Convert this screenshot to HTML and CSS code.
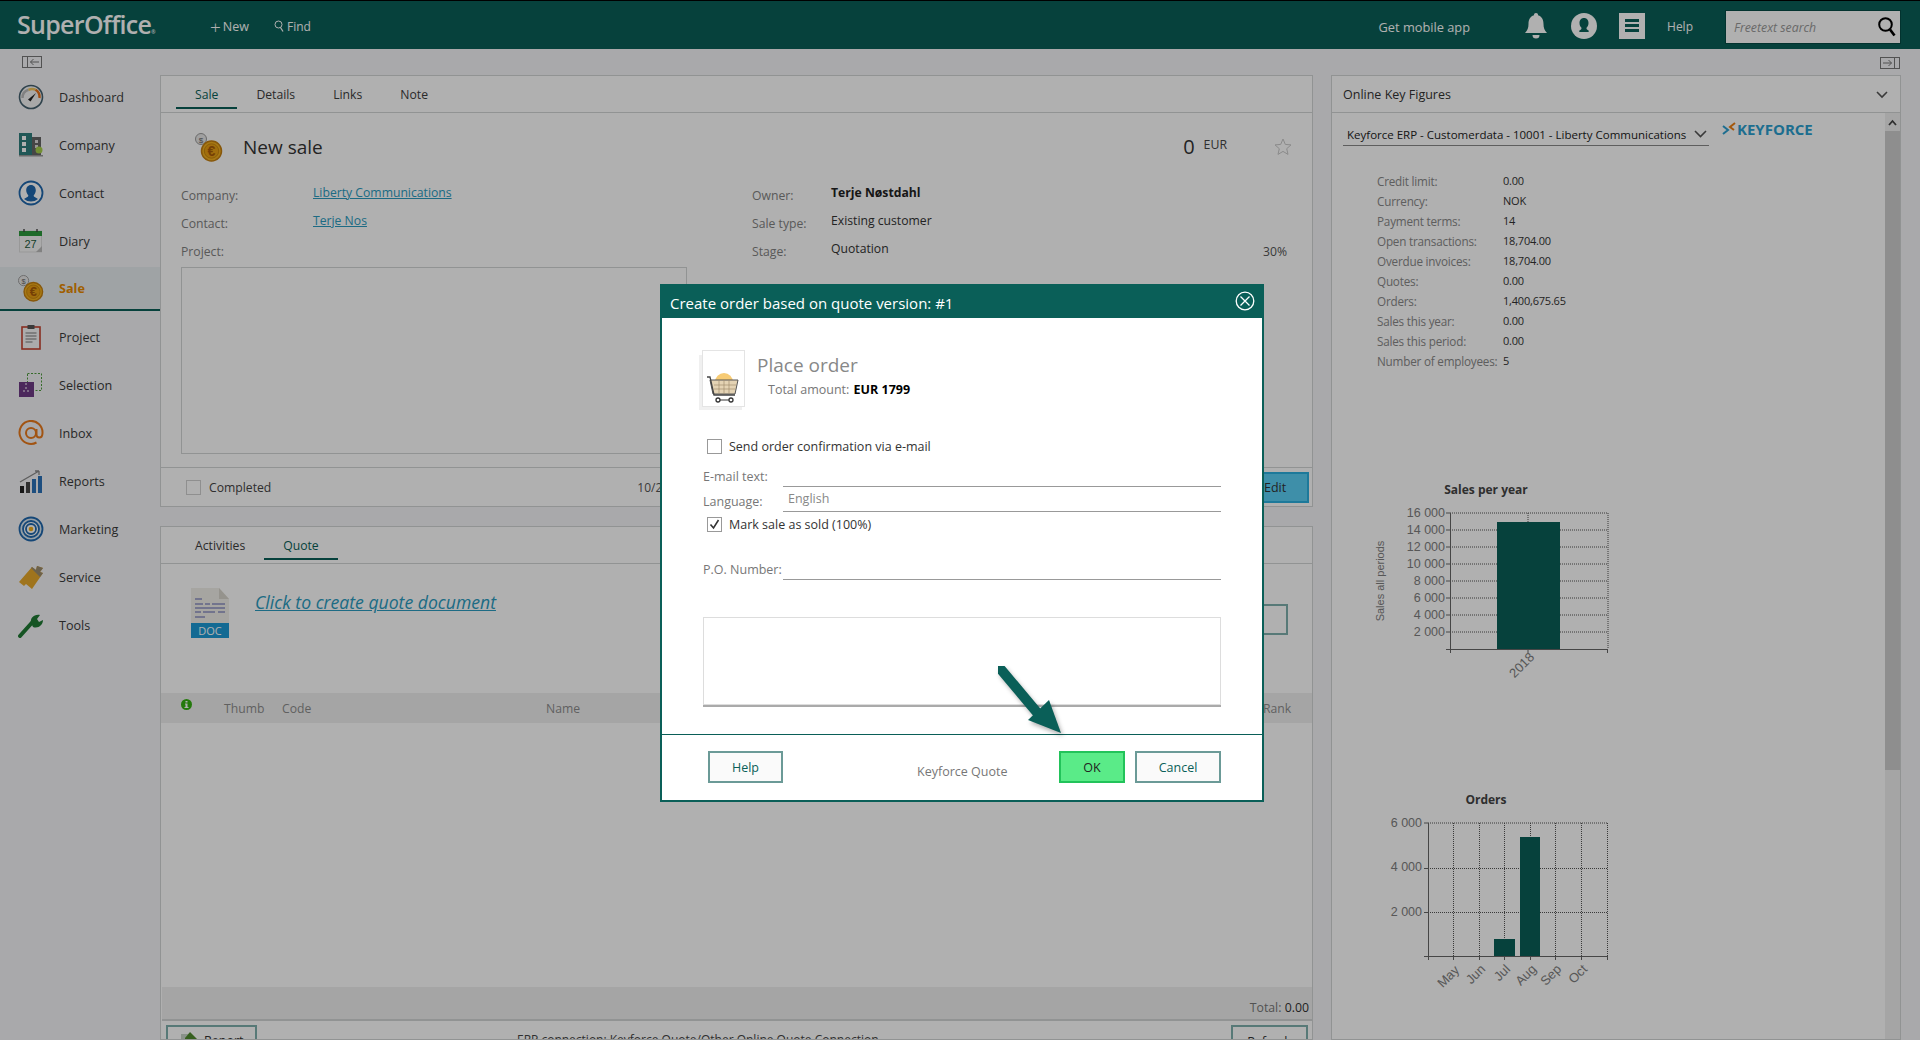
FILE: index.html
```html
<!DOCTYPE html>
<html lang="en">
<head>
  <meta charset="UTF-8">
  <title>SuperOffice - New sale</title>
  <link rel="stylesheet" href="styles.css">
</head>
<body>

<header class="topbar">
  <div class="logo">SuperOffice<span class="logo-mark">®</span></div>
  <a class="top-link new-link"><span class="plus">+</span>New</a>
  <a class="top-link find-link">
    <svg width="10" height="13" viewBox="0 0 10 13"><circle cx="4.5" cy="4.5" r="3.5" fill="none" stroke="#fff"/><path d="M6.5 7.5 9 11.5" stroke="#fff" stroke-width="1.2"/></svg>
    Find
  </a>
  <div class="top-spacer"></div>
  <a class="top-link mobile-link">Get mobile app</a>
  <svg class="top-icon bell" width="22" height="26" viewBox="0 0 22 26"><path d="M11 0a2 2 0 0 1 2 2.300C17 3.500 18.500 7 18.500 11c0 4 1 6.500 3.500 9H0c2.500-2.500 3.500-5 3.500-9 0-4 1.500-7.500 5.500-8.700A2 2 0 0 1 11 0z" fill="#fff"/><path d="M7.500 22h7a3.500 3.500 0 0 1-7 0z" fill="#fff"/></svg>
  <svg class="top-icon profile" width="26" height="26" viewBox="0 0 26 26"><circle cx="13" cy="13" r="13" fill="#fff"/><path d="M13 5c3 0 4.500 2.300 4.500 5 0 2-.8 3.600-1.800 4.600-.4.500-.2 1.400.3 1.800l1.500 1.100c.6.400.5 1.500-.5 1.500H9c-1 0-1.100-1.100-.5-1.500l1.500-1.100c.5-.4.700-1.300.3-1.800-1-1-1.800-2.600-1.800-4.600C8.500 7.300 10 5 13 5z" fill="#0a5f58"/></svg>
  <div class="menu-icon"><span></span><span></span><span></span></div>
  <a class="top-link help-link">Help</a>
  <div class="search">
    <span class="search-text">Freetext search</span>
    <svg width="18" height="20" viewBox="0 0 18 20"><circle cx="7.500" cy="7.500" r="6.300" fill="none" stroke="#000" stroke-width="2"/><path d="M12 12.500 16.500 18.500" stroke="#000" stroke-width="2.600"/></svg>
  </div>
</header>

<div class="workspace">
  <nav class="sidebar">
    <div class="strip">
      <svg width="20" height="12" viewBox="0 0 20 12"><rect x=".5" y=".5" width="19" height="11" fill="none" stroke="#777"/><path d="M5.500 0v12M17 6H8.500M11.500 3 8.500 6l3 3" fill="none" stroke="#777"/></svg>
    </div>
    <a class="nav-item">
      <svg width="26" height="26" viewBox="0 0 26 26"><circle cx="13" cy="13" r="11.500" fill="#f4f4f4" stroke="#44606e" stroke-width="1.600"/><path d="M4.500 14a8.500 8.500 0 0 1 6-8.200" fill="none" stroke="#bbb" stroke-width="2.500"/><path d="M10.500 5.800a8.500 8.500 0 0 1 7-.1" fill="none" stroke="#f2c65c" stroke-width="2.500"/><path d="M17.500 5.700a8.500 8.500 0 0 1 4 8.300" fill="none" stroke="#e8701a" stroke-width="2.500"/><path d="M10 15.500 18 9l-5.500 8.500z" fill="#222"/></svg>
      Dashboard
    </a>
    <a class="nav-item">
      <svg width="26" height="26" viewBox="0 0 26 26"><rect x="1" y="1" width="13" height="22" fill="#2f7f7d"/><rect x="14" y="5" width="9" height="18" fill="#666"/><path d="M4 4h4v4H4zM4 10h4v4H4zM4 16h4v4H4z" fill="#fff"/><path d="M17 8h3v3h-3zM17 13h3v3h-3z" fill="#ddd"/><circle cx="21" cy="18" r="3.500" fill="#a6cf4a"/><rect x="1" y="23" width="24" height="1.500" fill="#999"/></svg>
      Company
    </a>
    <a class="nav-item">
      <svg width="26" height="26" viewBox="0 0 26 26"><circle cx="13" cy="13" r="11.500" fill="#fff" stroke="#1f67ad" stroke-width="1.800"/><path d="M13 5c3 0 4.800 2.400 4.800 5.300 0 2.200-1 3.800-2 4.900-.3.500 0 1.200.5 1.500l3.700 2.200a11 11 0 0 1-14 0l3.700-2.200c.5-.3.800-1 .5-1.500-1-1.100-2-2.700-2-4.900C8.200 7.400 10 5 13 5z" fill="#1f67ad"/></svg>
      Contact
    </a>
    <a class="nav-item">
      <svg width="26" height="26" viewBox="0 0 26 26"><rect x="1.500" y="3" width="22" height="21" fill="#f7f7f7" stroke="#ddd"/><rect x="1" y="3" width="23" height="5" fill="#2c9a3c"/><path d="M6 1v3M19 1v3" stroke="#444" stroke-width="1.400"/><path d="M24 18v6h-6z" fill="#bbb"/><text x="12.500" y="19.500" class="diary-day">27</text></svg>
      Diary
    </a>
    <a class="nav-item active">
      <svg width="26" height="28" viewBox="0 0 28 30">
        <circle cx="6" cy="7" r="5.500" fill="#e8e8e8" stroke="#9a9a9a"/>
        <text x="6" y="10.500" class="coin-s">$</text>
        <circle cx="16.500" cy="19" r="10" fill="#f2b01e" stroke="#c47f10" stroke-width="1.500"/>
        <circle cx="16.500" cy="19" r="7.200" fill="#e9a013" stroke="#c9860f"/>
        <text x="16.500" y="24" class="coin-e">€</text>
      </svg>
      Sale
    </a>
    <a class="nav-item">
      <svg width="26" height="26" viewBox="0 0 26 26"><rect x="4" y="3" width="18" height="22" fill="#f8f8f8" stroke="#c5432f" stroke-width="1.600"/><rect x="9.500" y="1" width="7" height="4" fill="#555"/><path d="M7.500 9h11M7.500 12h11M7.500 15h11M7.500 18h7" stroke="#777"/></svg>
      Project
    </a>
    <a class="nav-item">
      <svg width="26" height="26" viewBox="0 0 26 26"><rect x="9.500" y="1.500" width="14" height="17" fill="none" stroke="#4f9b3e" stroke-dasharray="2 1.500"/><rect x="1" y="10" width="15" height="15" fill="#6f3a86"/><path d="M8 11v2M8 15v2M5 19h2M9 19h2" stroke="#fff"/></svg>
      Selection
    </a>
    <a class="nav-item">
      <svg width="26" height="26" viewBox="0 0 26 26"><path d="M18.500 22.500A11.500 11.500 0 1 1 24.500 13c0 3-1.500 4.500-3.300 4.500-1.800 0-2.700-1.200-2.700-3V9" fill="none" stroke="#ea7a1c" stroke-width="2"/><circle cx="13" cy="13" r="5" fill="none" stroke="#ea7a1c" stroke-width="2"/></svg>
      Inbox
    </a>
    <a class="nav-item">
      <svg width="26" height="26" viewBox="0 0 26 26"><path d="M2 14 21 3M21 3h-4M21 3v4" fill="none" stroke="#888" stroke-width="1.300"/><rect x="2" y="18" width="4" height="7" fill="#222"/><rect x="8" y="14" width="4" height="11" fill="#444"/><rect x="14" y="11" width="4" height="14" fill="#2a72b8"/><rect x="20" y="8" width="4" height="17" fill="#2a72b8"/></svg>
      Reports
    </a>
    <a class="nav-item">
      <svg width="26" height="26" viewBox="0 0 26 26"><circle cx="13" cy="13" r="11.500" fill="#d9e6ef" stroke="#1f67ad" stroke-width="1.800"/><circle cx="13" cy="13" r="8" fill="#fff" stroke="#1f67ad" stroke-width="1.800"/><circle cx="13" cy="13" r="5" fill="#fff" stroke="#1f67ad" stroke-width="1.800"/><circle cx="13" cy="13" r="2.300" fill="#f2b01e"/></svg>
      Marketing
    </a>
    <a class="nav-item">
      <svg width="26" height="26" viewBox="0 0 26 26"><path d="M1 18 14 3l4 3 1-4 6 2-3 4 3 1-11 16-6-5 -2 2z" fill="#e7a92a"/><path d="M14 3l4 3 1-4 6 2-3 4 3 1-3 4-9-9z" fill="#9c8d70"/></svg>
      Service
    </a>
    <a class="nav-item">
      <svg width="26" height="26" viewBox="0 0 26 26"><path d="M2 24 15 9.500" stroke="#1f7a34" stroke-width="4" stroke-linecap="round"/><path d="M13 11c-1-5 3-9 9-8l-3 4 2 3 4-2c0 5-5 9-10 7z" fill="#1f7a34"/></svg>
      Tools
    </a>
  </nav>

  <main class="main">
    <div class="strip"></div>

    <section class="panel sale-panel">
      <div class="tabs">
        <a class="tab active tab-sale">Sale</a>
        <a class="tab">Details</a>
        <a class="tab">Links</a>
        <a class="tab">Note</a>
      </div>
      <div class="sale-body">
        <div class="sale-head">
          <svg width="28" height="30" viewBox="0 0 28 30">
            <circle cx="6" cy="7" r="5.500" fill="#e8e8e8" stroke="#9a9a9a"/>
            <text x="6" y="10.500" class="coin-s">$</text>
            <circle cx="16.500" cy="19" r="10" fill="#f2b01e" stroke="#c47f10" stroke-width="1.500"/>
            <circle cx="16.500" cy="19" r="7.200" fill="#e9a013" stroke="#c9860f"/>
            <text x="16.500" y="24" class="coin-e">€</text>
          </svg>
          <h1>New sale</h1>
          <span class="amount">0</span>
          <span class="currency">EUR</span>
          <svg class="star" width="18" height="18" viewBox="0 0 18 18"><path d="M9 1l2.300 5.400 5.700.5-4.300 3.800 1.300 5.700L9 13.400l-5 3 1.300-5.700L1 6.900l5.700-.5z" fill="none" stroke="#c9c9c9"/></svg>
        </div>
        <div class="sale-fields">
          <div class="fields-left">
            <div class="field"><span class="field-label">Company:</span><a class="field-link">Liberty Communications</a></div>
            <div class="field"><span class="field-label">Contact:</span><a class="field-link">Terje Nos</a></div>
            <div class="field"><span class="field-label">Project:</span></div>
            <div class="project-box"></div>
          </div>
          <div class="fields-right">
            <div class="field"><span class="field-label">Owner:</span><span class="field-value strong">Terje Nøstdahl</span></div>
            <div class="field"><span class="field-label">Sale type:</span><span class="field-value">Existing customer</span></div>
            <div class="field"><span class="field-label">Stage:</span><span class="field-value">Quotation</span><span class="percent">30%</span></div>
          </div>
        </div>
      </div>
      <div class="sale-foot">
        <span class="check"></span>
        <span class="completed">Completed</span>
        <span class="sale-date">10/2/2018</span>
        <button class="btn-edit">Edit</button>
      </div>
    </section>

    <section class="panel quote-panel">
      <div class="tabs">
        <a class="tab tab-activities">Activities</a>
        <a class="tab active">Quote</a>
      </div>
      <div class="quote-row">
        <svg width="38" height="50" viewBox="0 0 38 50"><path d="M0 0h28l10 11v24H0z" fill="#f1efe9"/><path d="M28 0l10 11H28z" fill="#d8d5cc"/><path d="M4 11h7M4 16h8M14 16h5M21 16h13M4 20h30M4 24h6M12 24h12M27 24h7M4 29h10" stroke="#8c92c4" stroke-width="1.400"/><rect y="35" width="38" height="15" fill="#1c9ad6"/><text x="19" y="46.500" class="doc-text">DOC</text></svg>
        <a class="quote-link">Click to create quote document</a>
        <button class="btn-empty"></button>
      </div>
      <div class="table-head">
        <svg class="info-icon" width="11" height="11" viewBox="0 0 11 11"><circle cx="5.500" cy="5.500" r="5.500" fill="#35b012"/><path d="M4.500 2h2v1.500h-2zM4 4.500h2.500V8H7.500v1h-4V8h1V5.500H4z" fill="#fff"/></svg>
        <span class="th th-thumb">Thumb</span>
        <span class="th th-code">Code</span>
        <span class="th th-name">Name</span>
        <span class="th th-rank">Rank</span>
      </div>
      <div class="table-rows"></div>
      <div class="total-bar"><span class="total-label">Total:</span>&nbsp;0.00</div>
      <div class="quote-foot">
        <button class="btn-foot btn-report">
          <svg width="17" height="18" viewBox="0 0 17 18"><rect y="2" width="9" height="14" fill="#c8d4c8"/><path d="M9 0l8 8v10H4V6z" fill="#4f8a2e"/></svg>
          Report
        </button>
        <span class="erp-text">ERP connection: Keyforce Quote/Other Online Quote Connection</span>
        <button class="btn-foot btn-refresh">Refresh</button>
      </div>
    </section>
  </main>

  <aside class="side">
    <div class="strip strip-right">
      <svg width="20" height="12" viewBox="0 0 20 12"><rect x=".5" y=".5" width="19" height="11" fill="none" stroke="#777"/><path d="M14.500 0v12M3 6h8.500M8.500 3l3 3-3 3" fill="none" stroke="#777"/></svg>
    </div>
    <section class="panel figures">
      <div class="figures-head">
        <span>Online Key Figures</span>
        <svg width="12" height="8" viewBox="0 0 12 8"><path d="M1 1l5 5 5-5" fill="none" stroke="#555" stroke-width="1.600"/></svg>
      </div>
      <div class="figures-body">
        <div class="figures-content">
          <div class="source-row">
            <div class="source-select">
              <span>Keyforce ERP - Customerdata - 10001 - Liberty Communications</span>
              <svg width="13" height="8" viewBox="0 0 13 8"><path d="M1 1l5.500 5.500L12 1" fill="none" stroke="#555" stroke-width="1.600"/></svg>
            </div>
            <div class="keyforce">
              <svg width="15" height="15" viewBox="0 0 15 15"><path d="M1 4l5 4-5 4" fill="none" stroke="#2b9fd0" stroke-width="2"/><path d="M13 1 8 5l4 3" fill="none" stroke="#ee7f12" stroke-width="2"/></svg>
              <span>KEYFORCE</span>
            </div>
          </div>
          <dl class="figures-list">
            <div class="fig"><dt>Credit limit:</dt><dd>0.00</dd></div>
            <div class="fig"><dt>Currency:</dt><dd>NOK</dd></div>
            <div class="fig"><dt>Payment terms:</dt><dd>14</dd></div>
            <div class="fig"><dt>Open transactions:</dt><dd>18,704.00</dd></div>
            <div class="fig"><dt>Overdue invoices:</dt><dd>18,704.00</dd></div>
            <div class="fig"><dt>Quotes:</dt><dd>0.00</dd></div>
            <div class="fig"><dt>Orders:</dt><dd>1,400,675.65</dd></div>
            <div class="fig"><dt>Sales this year:</dt><dd>0.00</dd></div>
            <div class="fig"><dt>Sales this period:</dt><dd>0.00</dd></div>
            <div class="fig"><dt>Number of employees:</dt><dd>5</dd></div>
          </dl>

          <svg class="chart chart-year" width="250" height="210" viewBox="1370 480 250 210">
            <text x="1486" y="494" class="chart-title">Sales per year</text>
            <text class="axis-name" transform="translate(1384 581) rotate(-90)">Sales all periods</text>
            <path class="grid" d="M1450 513H1608M1450 530H1608M1450 547H1608M1450 564H1608M1450 581H1608M1450 598H1608M1450 615H1608M1450 632H1608M1528 513V522M1608 513V649"/>
            <path class="axis" d="M1450.500 513V649M1446 513h4M1446 530h4M1446 547h4M1446 564h4M1446 581h4M1446 598h4M1446 615h4M1446 632h4M1446 649.500H1608M1450.500 649v4M1528 649v4M1607.500 649v4"/>
            <rect class="bar" x="1497" y="522" width="63" height="127"/>
            <g class="y-labels">
              <text x="1445" y="517">16 000</text>
              <text x="1445" y="534">14 000</text>
              <text x="1445" y="551">12 000</text>
              <text x="1445" y="568">10 000</text>
              <text x="1445" y="585">8 000</text>
              <text x="1445" y="602">6 000</text>
              <text x="1445" y="619">4 000</text>
              <text x="1445" y="636">2 000</text>
            </g>
            <text class="x-label" transform="translate(1535 658) rotate(-45)">2018</text>
          </svg>

          <svg class="chart chart-orders" width="250" height="210" viewBox="1370 790 250 210">
            <text x="1486" y="804" class="chart-title">Orders</text>
            <path class="grid" d="M1428 823H1608M1428 868.500H1608M1428 912.500H1608M1453.500 823V956M1479.500 823V956M1504.500 823V939M1530.500 823V837M1555.500 823V956M1581.500 823V956M1607.500 823V956"/>
            <path class="axis" d="M1428.500 823V956M1424 823h4M1424 868.500h4M1424 912.500h4M1424 956.500H1608M1428.500 956v4M1453.500 956v4M1479.500 956v4M1504.500 956v4M1530.500 956v4M1555.500 956v4M1581.500 956v4M1607.500 956v4"/>
            <rect class="bar" x="1494" y="939" width="21" height="17"/>
            <rect class="bar" x="1520" y="837" width="20" height="119"/>
            <g class="y-labels">
              <text x="1422" y="827">6 000</text>
              <text x="1422" y="871">4 000</text>
              <text x="1422" y="916">2 000</text>
            </g>
            <text class="x-label" transform="translate(1460 971) rotate(-45)">May</text>
            <text class="x-label" transform="translate(1486 970) rotate(-45)">Jun</text>
            <text class="x-label" transform="translate(1511 970) rotate(-45)">Jul</text>
            <text class="x-label" transform="translate(1537 970) rotate(-45)">Aug</text>
            <text class="x-label" transform="translate(1562 970) rotate(-45)">Sep</text>
            <text class="x-label" transform="translate(1588 970) rotate(-45)">Oct</text>
          </svg>
        </div>
        <div class="scrollbar">
          <svg width="15" height="18" viewBox="0 0 15 18"><path d="M4 12l3.500-4 3.500 4" fill="none" stroke="#444" stroke-width="1.800"/></svg>
          <div class="scroll-thumb"></div>
        </div>
      </div>
    </section>
  </aside>
</div>

<div class="backdrop">
  <div class="dialog">
    <div class="dialog-title">
      <span>Create order based on quote version: #1</span>
      <svg width="20" height="20" viewBox="0 0 20 20"><circle cx="10" cy="10" r="8.800" fill="none" stroke="#fff" stroke-width="1.300"/><path d="M5.500 5.500l9 9M14.500 5.500l-9 9" stroke="#fff" stroke-width="1.300"/></svg>
    </div>
    <div class="dialog-body">
      <div class="order-head">
        <svg class="order-icon" width="49" height="60" viewBox="0 0 49 60">
          <rect x="0" y="5" width="43" height="55" fill="#f0f0f0"/>
          <rect x="3.500" y=".5" width="42" height="56" fill="#fff" stroke="#e4e4e4"/>
          <path d="M16 32a9 9 0 0 1 18 0z" fill="#f7cb74"/>
          <path d="M11 30h28l-3 14H14z" fill="#e4d3b4" stroke="#555"/>
          <path d="M8 27h3l4 18h21" fill="none" stroke="#444" stroke-width="1.300"/>
          <path d="M15 35h22M15 39h21M20 30v14M25 30v14M30 30v14" stroke="#a58f70" stroke-width=".7"/>
          <circle cx="19" cy="50" r="2" fill="#fff" stroke="#333" stroke-width="1.300"/>
          <circle cx="32" cy="50" r="2" fill="#fff" stroke="#333" stroke-width="1.300"/>
          <path d="M21 50h9" stroke="#333"/>
        </svg>
        <div class="order-text">
          <div class="order-title">Place order</div>
          <div class="order-total">Total amount: <b>EUR 1799</b></div>
        </div>
      </div>
      <label class="check-row check-mail"><span class="check dark"></span>Send order confirmation via e-mail</label>
      <div class="line-field mail-field"><span>E-mail text:</span><div class="line-input"></div></div>
      <div class="line-field lang-field"><span>Language:</span><div class="line-input">English</div></div>
      <label class="check-row check-sold">
        <span class="check dark"><svg width="13" height="13" viewBox="0 0 13 13"><path d="M2.500 6.500l3 3.500 5-8" fill="none" stroke="#333" stroke-width="1.600"/></svg></span>
        Mark sale as sold (100%)
      </label>
      <div class="line-field po-field"><span>P.O. Number:</span><div class="line-input"></div></div>
      <div class="note-box"></div>
    </div>
    <div class="dialog-foot">
      <button class="btn btn-help">Help</button>
      <span class="foot-name">Keyforce Quote</span>
      <button class="btn btn-ok">OK</button>
      <button class="btn btn-cancel">Cancel</button>
    </div>
    <svg class="arrow" width="76" height="80" viewBox="0 0 76 80"><path d="M3 3.500 42 50" stroke="#0a5f58" stroke-width="10" stroke-linecap="round"/><path d="M63 67 30 54 51 34z" fill="#0a5f58"/></svg>
  </div>
</div>

</body>
</html>
```

FILE: styles.css
```css
* {
  box-sizing: border-box;
}

body {
  margin: 0;
  height: 100vh;
  overflow: hidden;
  display: flex;
  flex-direction: column;
  background: #f5f5f8;
  color: #3d3d3d;
  font-family: "Open Sans", "Noto Sans", sans-serif;
  font-size: 12px;
}

.coin-s {
  font: 8px "Liberation Sans", sans-serif;
  text-anchor: middle;
  fill: #666;
}

.coin-e {
  font: bold 14px "Liberation Sans", sans-serif;
  text-anchor: middle;
  fill: #a85a08;
}

.diary-day {
  font: 11px "Liberation Sans", sans-serif;
  text-anchor: middle;
  fill: #1c5a3c;
}

.doc-text {
  font: 11px "Open Sans", sans-serif;
  text-anchor: middle;
  fill: #fff;
}

/* top bar */
.topbar {
  height: 49px;
  flex: none;
  display: flex;
  align-items: center;
  padding-top: 1px;
  background: #0a5f58;
  border-top: 1px solid #000;
  color: #fff;
}

.logo {
  width: 210px;
  margin-top: -4px;
  padding-left: 17px;
  font-size: 25px;
  font-weight: 600;
  letter-spacing: -0.7px;
}

.logo-mark {
  font-size: 5px;
}

.top-link {
  padding-top: 2px;
  font-size: 12px;
  color: #fff;
}

.plus {
  font-size: 19px;
  line-height: 12px;
  font-weight: 300;
  margin-right: 2px;
}

.new-link {
  display: flex;
  align-items: center;
  width: 64px;
  font-size: 12.500px;
}

.find-link {
  display: flex;
  align-items: center;
  gap: 3px;
}

.top-spacer {
  flex: 1;
}

.mobile-link {
  margin-right: 55px;
  font-size: 12.800px;
}

.bell {
  margin-right: 24px;
}

.profile {
  margin-right: 22px;
}

.menu-icon {
  width: 26px;
  height: 26px;
  background: #fff;
  display: flex;
  flex-direction: column;
  justify-content: center;
  gap: 2px;
  padding: 0 6px;
  margin-right: 22px;
}

.menu-icon span {
  height: 3px;
  background: #0a5f58;
}

.help-link {
  margin-right: 33px;
}

.search {
  width: 174px;
  height: 32px;
  margin: 2px 20px 0 0;
  background: #fff;
  outline: 1px solid #054a44;
  display: flex;
  align-items: center;
  justify-content: space-between;
  padding: 0 4px 0 8px;
}

.search-text {
  padding-top: 2px;
  font-style: italic;
  color: #999;
  font-size: 12.300px;
}

/* layout */
.workspace {
  flex: 1;
  min-height: 0;
  display: flex;
}

.strip {
  height: 26px;
  flex: none;
  display: flex;
  align-items: center;
  padding-top: 2px;
}

.strip-right {
  justify-content: flex-end;
  padding-right: 1px;
}

.sidebar {
  width: 160px;
  flex: none;
}

.sidebar .strip {
  padding-left: 22px;
  height: 24px;
}

.nav-item {
  height: 48px;
  display: flex;
  align-items: center;
  gap: 15px;
  padding-left: 18px;
  color: #3a3a3a;
  font-size: 12.600px;
}

.nav-item.active {
  height: 44px;
  margin: 2px 0;
  background: #e6ecef;
  border-bottom: 2px solid #0a5f58;
  color: #e68a00;
  font-weight: 700;
}

.main {
  width: 1153px;
  flex: none;
  display: flex;
  flex-direction: column;
  margin-right: 18px;
}

.side {
  width: 570px;
  flex: none;
  display: flex;
  flex-direction: column;
}

.panel {
  background: #fff;
  border: 1px solid #d2d6d6;
}

/* tabs */
.tabs {
  height: 37px;
  flex: none;
  display: flex;
  padding-left: 15px;
  border-bottom: 1px solid #d2d6d6;
}

.tab {
  height: 33px;
  padding: 0 19px;
  line-height: 38px;
  font-size: 12.200px;
  color: #3d3d3d;
}

.tab.active {
  color: #0a5f58;
  border-bottom: 2px solid #0a5f58;
}

/* sale panel */
.sale-panel {
  height: 432px;
  flex: none;
  margin-bottom: 19px;
  display: flex;
  flex-direction: column;
}

.sale-body {
  flex: 1;
  padding: 0 20px;
}

.sale-head {
  height: 69px;
  display: flex;
  align-items: center;
  padding: 0 0 2px 14px;
}

.sale-head h1 {
  margin: 0 0 0 20px;
  font-size: 19px;
  font-weight: 400;
  color: #333;
}

.amount {
  margin-left: auto;
  font-size: 20px;
  color: #333;
}

.currency {
  margin: 0 47px 4px 9px;
  font-size: 12.300px;
  color: #444;
}

.sale-fields {
  display: flex;
}

.fields-left {
  width: 506px;
  margin-right: 65px;
}

.fields-right {
  flex: 1;
}

.field {
  height: 28px;
  display: flex;
  line-height: 28px;
  font-size: 12.200px;
}

.field-label {
  width: 132px;
  flex: none;
  color: #828282;
}

.fields-right .field-label {
  width: 79px;
}

.field-link {
  line-height: 22px;
  color: #2b9bc0;
  text-decoration: underline;
}

.field-value {
  line-height: 22px;
  color: #333;
}

.field-value.strong {
  font-weight: 700;
  color: #222;
}

.percent {
  margin-left: auto;
  padding-right: 5px;
  color: #555;
}

.project-box {
  height: 187px;
  margin-top: 1px;
  border: 1px solid #d2d6d6;
}

.sale-foot {
  height: 39px;
  flex: none;
  display: flex;
  align-items: center;
  padding: 0 3px 0 25px;
  border-top: 1px solid #d2d6d6;
}

.check {
  width: 15px;
  height: 15px;
  flex: none;
  display: inline-block;
  border: 1px solid #cfcfcf;
  background: #fff;
}

.check.dark {
  border-color: #999;
}

.check svg {
  display: block;
}

.completed {
  margin-left: 8px;
  font-size: 12.200px;
  color: #444;
}

.sale-date {
  margin-left: 366px;
  color: #555;
}

.btn-edit {
  margin-left: auto;
  width: 140px;
  height: 31px;
  padding: 0 0 0 93px;
  text-align: left;
  background: #5bcff5;
  border: 2px solid #2bb0e0;
  font: 12.500px "Open Sans", sans-serif;
  color: #333;
}

/* quote panel */
.quote-panel {
  flex: 1;
  min-height: 0;
  display: flex;
  flex-direction: column;
  overflow: hidden;
}

.quote-row {
  height: 129px;
  flex: none;
  display: flex;
  align-items: flex-start;
  padding: 24px 24px 0 30px;
}

.quote-link {
  margin: 2px 0 0 26px;
  font-size: 17.600px;
  font-style: italic;
  color: #2b9bc0;
  text-decoration: underline;
}

.btn-empty {
  margin: 16px 0 0 auto;
  width: 120px;
  height: 31px;
  background: #fff;
  border: 2px solid #7fb0ad;
}

.table-head {
  height: 30px;
  flex: none;
  position: relative;
  display: flex;
  align-items: center;
  background: #f0f0f0;
  font-size: 12.200px;
  color: #8c8c8c;
}

.info-icon {
  position: absolute;
  left: 20px;
  top: 6px;
}

.th {
  flex: none;
}

.th-thumb {
  margin-left: 63px;
  width: 58px;
}

.th-code {
  width: 264px;
}

.th-rank {
  position: absolute;
  left: 1102px;
}

.table-rows {
  flex: 1;
}

.total-bar {
  height: 34px;
  flex: none;
  display: flex;
  align-items: center;
  justify-content: flex-end;
  margin-left: 1px;
  padding: 8px 3px 0 0;
  background: #f0f0f0;
  border-bottom: 2px solid #d2d6d6;
  color: #333;
  font-size: 12.300px;
}

.total-label {
  color: #777;
}

.quote-foot {
  height: 18px;
  flex: none;
  display: flex;
  align-items: flex-start;
  padding: 4px 4px 0 5px;
  overflow: hidden;
}

.btn-foot {
  height: 32px;
  flex: none;
  background: #fff;
  border: 2px solid #7fb0ad;
  font: 12.500px "Open Sans", sans-serif;
  color: #333;
}

.btn-report {
  width: 91px;
  display: flex;
  align-items: flex-start;
  gap: 6px;
  padding: 5px 0 0 13px;
}

.btn-refresh {
  width: 77px;
}

.erp-text {
  flex: 1;
  margin: 6px 0 0 260px;
  color: #444;
  font-size: 12px;
}

/* key figures */
.figures {
  flex: 1;
  min-height: 0;
  display: flex;
  flex-direction: column;
  overflow: hidden;
}

.figures-head {
  height: 37px;
  flex: none;
  display: flex;
  align-items: center;
  justify-content: space-between;
  padding: 1px 12px 0 11px;
  border-bottom: 1px solid #d2d6d6;
  font-size: 12.500px;
  color: #333;
}

.figures-body {
  flex: 1;
  min-height: 0;
  display: flex;
}

.figures-content {
  flex: 1;
  min-width: 0;
}

.source-row {
  display: flex;
  padding: 8px 0 0 11px;
  height: 58px;
}

.source-select {
  width: 366px;
  height: 23px;
  margin-top: 2px;
  display: flex;
  align-items: center;
  justify-content: space-between;
  padding: 0 2px 0 4px;
  border-bottom: 1px solid #888;
  font-size: 11.500px;
  color: #222;
}

.keyforce {
  margin-left: 13px;
  margin-top: -1px;
  display: flex;
  align-items: center;
  height: 18px;
  color: #2b9fd0;
  font-size: 15px;
  font-weight: 700;
}

.figures-list {
  margin: 0 0 0 45px;
}

.fig {
  height: 20px;
  display: flex;
  line-height: 20px;
  font-size: 11px;
  letter-spacing: -0.2px;
}

.fig dt {
  width: 126px;
  font-size: 11.700px;
  color: #888;
}

.fig dd {
  margin: 0;
  color: #333;
}

.chart {
  display: block;
  margin-left: 38px;
}

.chart-year {
  margin-top: 109px;
}

.chart-orders {
  margin-top: 100px;
}

.chart-title {
  font: 700 12px "Open Sans", sans-serif;
  fill: #444;
  text-anchor: middle;
}

.axis-name {
  font: 11px "Liberation Sans", sans-serif;
  fill: #7e7e7e;
  text-anchor: middle;
}

.grid {
  fill: none;
  stroke: #555;
  stroke-dasharray: 1 1;
}

.axis {
  fill: none;
  stroke: #666;
}

.bar {
  fill: #0a5f58;
}

.y-labels text {
  font: 12.500px "Liberation Sans", sans-serif;
  fill: #7e7e7e;
  text-anchor: end;
}

.x-label {
  font: 13px "Liberation Sans", sans-serif;
  fill: #7e7e7e;
  text-anchor: end;
}

.scrollbar {
  width: 15px;
  flex: none;
  background: #f0f0f0;
}

.scrollbar svg {
  display: block;
}

.scroll-thumb {
  height: 639px;
  background: #cecece;
}

/* dialog */
.backdrop {
  position: fixed;
  inset: 0;
  padding: 46px 0 0 4px;
  display: flex;
  align-items: center;
  justify-content: center;
  background: rgba(0, 0, 0, 0.31);
}

.dialog {
  position: relative;
  width: 604px;
  height: 518px;
  display: flex;
  flex-direction: column;
  background: #fff;
  border: 2px solid #0a5f58;
  border-top: none;
}

.dialog-title {
  height: 34px;
  flex: none;
  display: flex;
  align-items: center;
  justify-content: space-between;
  padding: 3px 7px 0 8px;
  background: #0a5f58;
  color: #fff;
  font-size: 15px;
}

.dialog-title svg {
  margin-top: -3px;
}

.dialog-body {
  flex: 1;
  padding: 32px 41px 0 41px;
}

.order-head {
  height: 75px;
  display: flex;
}

.order-icon {
  margin-left: -4px;
}

.order-title {
  margin: 0 0 0 9px;
  font-size: 19px;
  line-height: 30px;
  color: #888;
}

.order-total {
  margin: 1px 0 0 20px;
  font-size: 12.500px;
  color: #777;
}

.order-total b {
  margin-left: 1px;
  color: #000;
}

.check-row {
  display: flex;
  align-items: center;
  gap: 7px;
  padding-left: 4px;
  font-size: 12.500px;
  color: #333;
}

.check-mail {
  margin-top: 13px;
  height: 17px;
}

.line-field {
  display: flex;
  align-items: flex-end;
  font-size: 12.500px;
  color: #777;
}

.line-field span {
  width: 80px;
  flex: none;
  padding-bottom: 2px;
}

.line-input {
  flex: 1;
  height: 22px;
  padding: 0 0 2px 5px;
  border-bottom: 1px solid #999;
  color: #888;
}

.mail-field {
  margin-top: 10px;
}

.lang-field {
  margin-top: 3px;
}

.check-sold {
  margin-top: 4px;
  height: 17px;
}

.po-field {
  margin-top: 25px;
}

.note-box {
  height: 88px;
  margin-top: 37px;
  border: 1px solid #ddd;
  box-shadow: 0 2px 0 #aaa;
}

.dialog-foot {
  height: 66px;
  flex: none;
  display: flex;
  align-items: flex-start;
  padding: 16px 41px 0 46px;
  border-top: 1px solid #0a5f58;
}

.btn {
  height: 32px;
  background: #fafafa;
  border: 2px solid #6b9a97;
  font: 12.500px "Open Sans", sans-serif;
  color: #0a5f58;
}

.btn-help {
  width: 75px;
}

.foot-name {
  margin: 12px 0 0 134px;
  width: 142px;
  font-size: 12.500px;
  color: #777;
}

.btn-ok {
  width: 66px;
  margin-right: 10px;
  background: #5aeb88;
  border-color: #22c35a;
  color: #222;
}

.btn-cancel {
  width: 86px;
}

.arrow {
  position: absolute;
  left: 336px;
  top: 382px;
  filter: drop-shadow(2px 3px 2px rgba(0, 0, 0, 0.3));
}
```
